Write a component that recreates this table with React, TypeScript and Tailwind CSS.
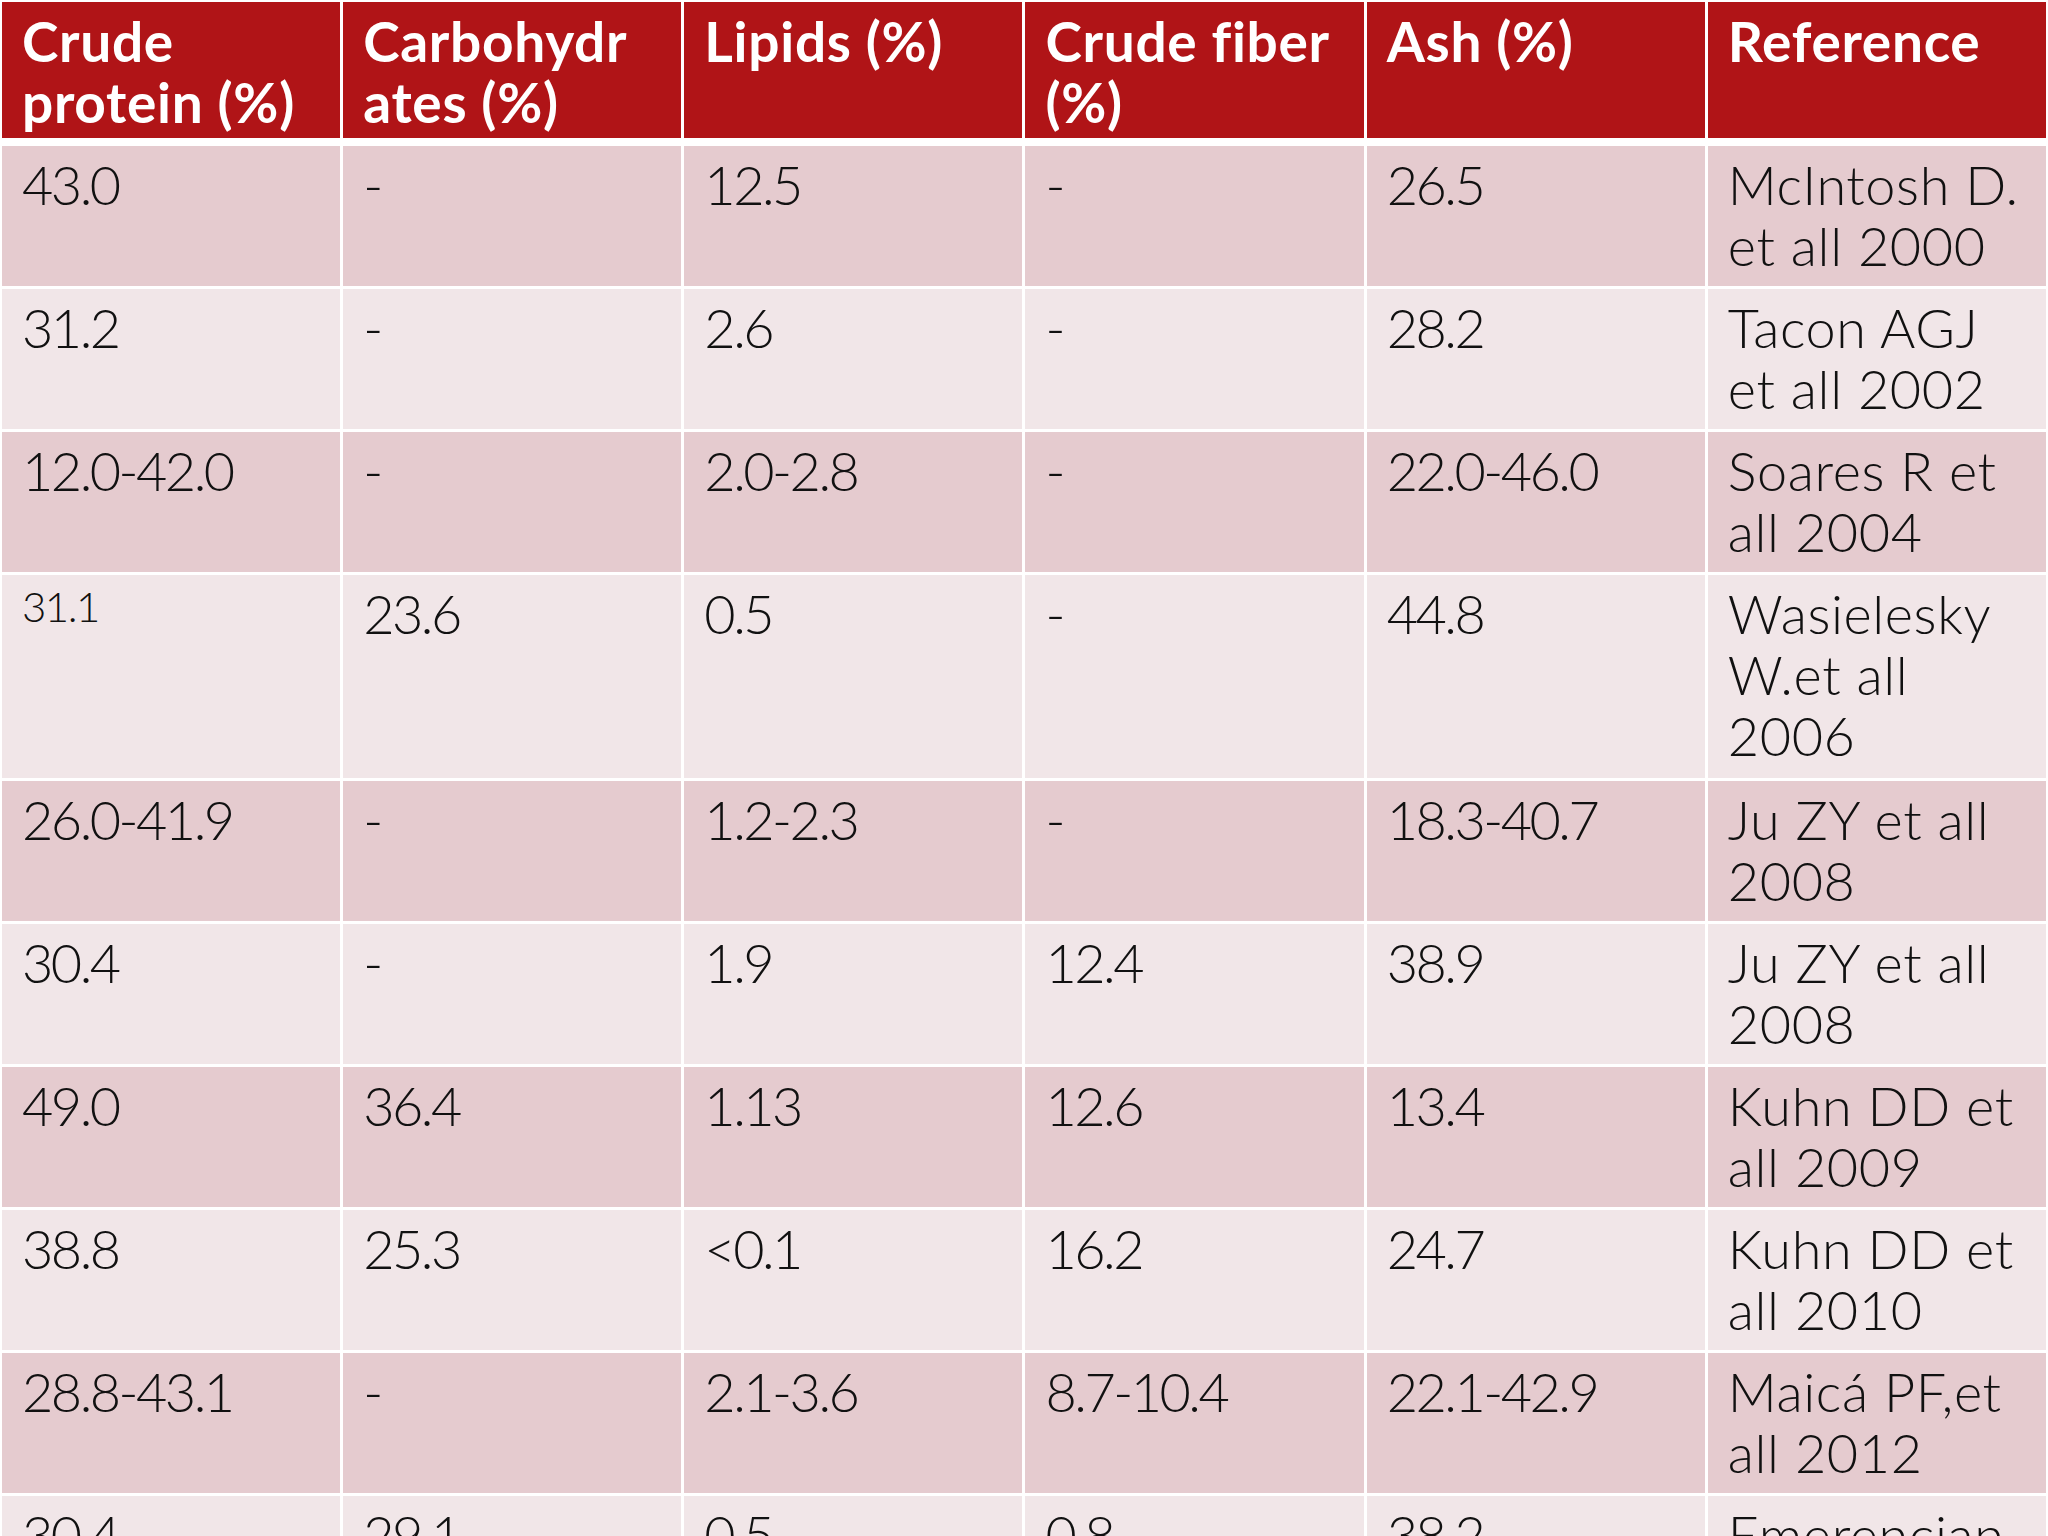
import React from "react";

type Row = { cells: React.ReactNode[]; tall?: boolean };

const rows: Row[] = [
  { cells: ["43.0", "-", "12.5", "-", "26.5", <>McIntosh D.<br />et all 2000</>] },
  { cells: ["31.2", "-", "2.6", "-", "28.2", <>Tacon AGJ<br />et all 2002</>] },
  { cells: ["12.0-42.0", "-", "2.0-2.8", "-", "22.0-46.0", <>Soares R et<br />all 2004</>] },
  {
    tall: true,
    cells: [
      <span className="text-[42px] leading-[40px] block pt-[3px] tracking-[-1.5px]">31.1</span>,
      "23.6",
      "0.5",
      "-",
      "44.8",
      <>Wasielesky<br />W.et all<br />2006</>,
    ],
  },
  { cells: ["26.0-41.9", "-", "1.2-2.3", "-", "18.3-40.7", <>Ju ZY et all<br />2008</>] },
  { cells: ["30.4", "-", "1.9", "12.4", "38.9", <>Ju ZY et all<br />2008</>] },
  { cells: ["49.0", "36.4", "1.13", "12.6", "13.4", <>Kuhn DD et<br />all 2009</>] },
  { cells: ["38.8", "25.3", "<0.1", "16.2", "24.7", <>Kuhn DD et<br />all 2010</>] },
  { cells: ["28.8-43.1", "-", "2.1-3.6", "8.7-10.4", "22.1-42.9", <>Maicá PF,et<br />all 2012</>] },
  { cells: ["30.4", "29.1", "0.5", "0.8", "38.2", <>Emerencian<br />o MGC et all</>] },
];

const headers: React.ReactNode[] = [
  <>Crude<br />protein (%)</>,
  <>Carbohydr<br />ates (%)</>,
  <>Lipids (%)</>,
  <>Crude fiber<br />(%)</>,
  <>Ash (%)</>,
  <>Reference</>,
];

export default function App() {
  return (
    <div
      className="w-[2048px] h-[1536px] overflow-hidden bg-white px-[2px] pt-[2px]"
      style={{ fontFamily: "Lato, 'Open Sans', sans-serif" }}
    >
      <div className="grid grid-cols-6 gap-x-[3px] h-[136px]">
        {headers.map((h, i) => (
          <div
            key={i}
            className="bg-[#b01417] text-white font-bold text-[55px] leading-[61px] tracking-[0.7px] pl-[20px] pt-[9px] whitespace-nowrap overflow-hidden"
          >
            {h}
          </div>
        ))}
      </div>
      <div className="flex flex-col gap-y-[3px] mt-[8px]">
        {rows.map((r, ri) => (
          <div
            key={ri}
            className={`grid grid-cols-6 gap-x-[3px] ${r.tall ? "h-[203px]" : "h-[140px]"}`}
          >
            {r.cells.map((c, ci) => (
              <div
                key={ci}
                className={`${ri % 2 === 0 ? "bg-[#e5cbcf]" : "bg-[#f1e6e8]"} ${ci === 5 ? "tracking-[0.6px]" : "tracking-[-2.5px]"} text-[#111111] font-light text-[54px] leading-[61px] pl-[20px] pt-[8px] whitespace-nowrap overflow-hidden`}
              >
                {c}
              </div>
            ))}
          </div>
        ))}
      </div>
    </div>
  );
}
